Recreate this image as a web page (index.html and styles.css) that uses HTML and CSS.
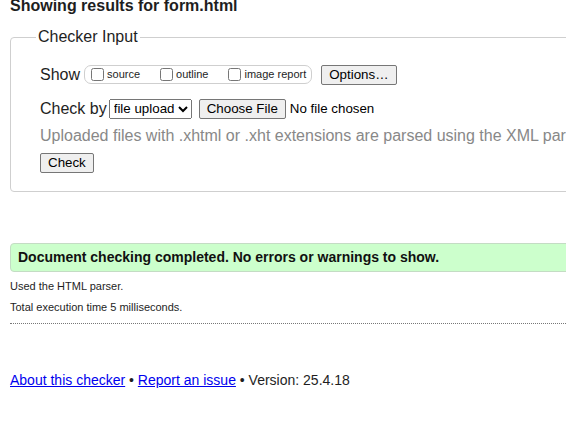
FILE: index.html
```html
<!DOCTYPE html>
<html lang="en">
<head>
<meta charset="utf-8">
<title>Showing results for form.html - Nu Html Checker</title>
<link rel="stylesheet" href="styles.css">
</head>
<body>
<div class="page">
  <h2 class="title">Showing results for form.html</h2>
  <form class="checker">
    <fieldset class="input-set">
      <legend class="legend">Checker Input</legend>
      <div class="row row-show">
        <span class="row-label">Show</span>
        <span class="options-pill">
          <label class="opt"><input type="checkbox" class="cb">source</label>
          <label class="opt"><input type="checkbox" class="cb">outline</label>
          <label class="opt opt-last"><input type="checkbox" class="cb">image report</label>
        </span>
        <button type="button" class="btn btn-options">Options…</button>
      </div>
      <div class="row row-by">
        <span class="row-label">Check by</span>
        <select class="sel"><option>file upload</option></select>
        <input type="file" class="file">
      </div>
      <p class="hint">Uploaded files with .xhtml or .xht extensions are parsed using the XML parser.</p>
      <div class="row row-submit">
        <button type="button" class="btn">Check</button>
      </div>
    </fieldset>
  </form>
  <div class="success">Document checking completed. No errors or warnings to show.</div>
  <p class="details details-first">Used the HTML parser.</p>
  <p class="details">Total execution time 5 milliseconds.</p>
  <hr class="sep">
  <p class="footer"><a class="link" href="#about">About this checker</a> • <a class="link" href="#issue">Report an issue</a> • Version: 25.4.18</p>
</div>
</body>
</html>
```
FILE: styles.css
```css
html, body {
  margin: 0;
  padding: 0;
  overflow: hidden;
  background: #fff;
}

body {
  font-family: "Liberation Sans", Arial, sans-serif;
  color: #1e1e1e;
}

.page {
  width: 760px;
  padding-left: 10px;
}

.title {
  margin: -2px 0 0;
  font-size: 16px;
  line-height: 16px;
  font-weight: bold;
}

.checker {
  margin: 0;
}

.input-set {
  margin: 14px 0 0;
  border: 1px solid #cfcfcf;
  border-radius: 4px;
  padding: 18px 0 18px 29px;
  min-width: 0;
}

.legend {
  margin-left: -4px;
  padding: 0 2px;
  font-size: 16px;
}

.row {
  display: flex;
  align-items: center;
  height: 21px;
}

.row-label {
  font-size: 16px;
  line-height: 21px;
}

.options-pill {
  display: inline-flex;
  align-items: center;
  margin-left: 4px;
  padding: 2px 5px 2px 2px;
  border: 1px solid #cfcfcf;
  border-radius: 7px;
}

.opt {
  display: inline-flex;
  align-items: center;
  font-size: 11px;
  line-height: 13px;
  margin-right: 16px;
}

.opt-last {
  margin-right: 0;
}

.cb {
  width: 13px;
  height: 13px;
  margin: 0 3px 0 4px;
}

.btn {
  font-family: "Liberation Sans", Arial, sans-serif;
  font-size: 13.33px;
  line-height: 16px;
  color: #000;
  background: #efefef;
  border: 1px solid #767676;
  border-radius: 2px;
  padding: 1px 7px;
  margin: 0;
}

.btn-options {
  margin-left: 9px;
}

.row-by {
  margin-top: 13px;
}

.sel {
  font-family: "Liberation Sans", Arial, sans-serif;
  font-size: 13.33px;
  color: #000;
  margin: 0 0 0 2px;
  height: 20px;
}

.file {
  font-family: "Liberation Sans", Arial, sans-serif;
  font-size: 13.33px;
  color: #000;
  margin-left: 7px;
}

.file::file-selector-button {
  font-family: "Liberation Sans", Arial, sans-serif;
  font-size: 13.33px;
  line-height: 16px;
  color: #000;
  background: #efefef;
  border: 1px solid #767676;
  border-radius: 2px;
  padding: 1px 7px;
  margin-right: 4px;
}

.hint {
  margin: 8px 0 0;
  font-size: 16px;
  color: #888;
  white-space: nowrap;
}

.row-submit {
  margin-top: 8px;
  height: 20px;
}

.success {
  margin-top: 51px;
  border: 1px solid #c4dcc4;
  border-radius: 4px;
  background: #ccffcc;
  padding: 5px 7px;
  font-size: 14px;
  line-height: 17px;
  font-weight: bold;
  color: #111;
}

.details {
  margin: 8px 0 0;
  font-size: 11px;
  line-height: 13px;
}

.details-first {
  margin-top: 8px;
}

.sep {
  margin: 9px 0 0;
  border: 0;
  border-top: 1px dotted #777;
  height: 0;
}

.footer {
  margin: 48px 0 0;
  font-size: 14px;
  line-height: 16px;
}

.link {
  color: #0000ee;
  text-decoration: underline;
}
```
